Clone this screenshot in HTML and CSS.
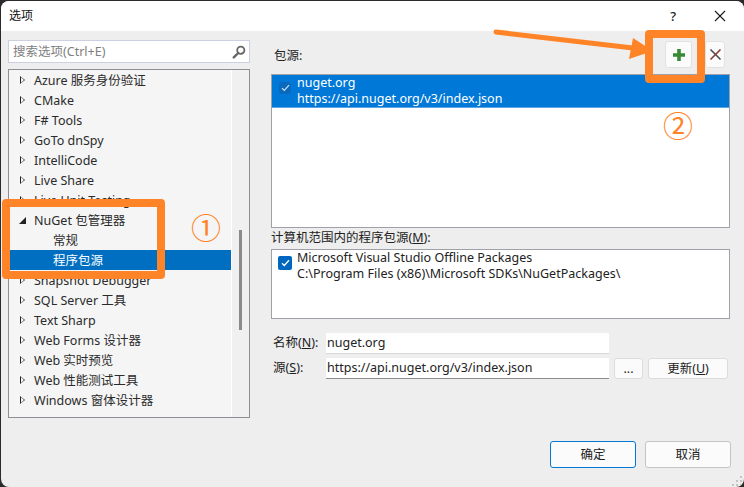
FILE: index.html
```html
<!DOCTYPE html>
<html lang="zh">
<head>
<meta charset="utf-8">
<title>选项</title>
<link rel="stylesheet" href="styles.css">
</head>
<body>
<div class="window">
  <header class="titlebar">
    <span class="title">选项</span>
    <span class="help">?</span>
    <svg class="close" width="12" height="12" viewBox="0 0 12 12"><path d="M1 1l10 10M11 1L1 11" stroke="#1a1a1a" stroke-width="1.1" fill="none"/></svg>
  </header>
  <main class="content">
    <section class="left">
      <div class="search">
        <span class="placeholder">搜索选项(Ctrl+E)</span>
        <svg class="search-icon" width="14" height="14" viewBox="0 0 14 14"><circle cx="8.8" cy="5.2" r="3.6" fill="none" stroke="#666" stroke-width="1.8"/><path d="M6.2 8L1.8 12.4" stroke="#666" stroke-width="2.4" stroke-linecap="round"/></svg>
      </div>
      <div class="tree">
        <div class="tree-list">
          <div class="row"><i class="tri"></i>Azure 服务身份验证</div>
          <div class="row"><i class="tri"></i>CMake</div>
          <div class="row"><i class="tri"></i>F# Tools</div>
          <div class="row"><i class="tri"></i>GoTo dnSpy</div>
          <div class="row"><i class="tri"></i>IntelliCode</div>
          <div class="row"><i class="tri"></i>Live Share</div>
          <div class="row"><i class="tri"></i>Live Unit Testing</div>
          <div class="row"><i class="tri open"></i>NuGet 包管理器</div>
          <div class="row child">常规</div>
          <div class="row child selected">程序包源</div>
          <div class="row"><i class="tri"></i>Snapshot Debugger</div>
          <div class="row"><i class="tri"></i>SQL Server 工具</div>
          <div class="row"><i class="tri"></i>Text Sharp</div>
          <div class="row"><i class="tri"></i>Web Forms 设计器</div>
          <div class="row"><i class="tri"></i>Web 实时预览</div>
          <div class="row"><i class="tri"></i>Web 性能测试工具</div>
          <div class="row"><i class="tri"></i>Windows 窗体设计器</div>
        </div>
        <div class="scrollbar"><div class="thumb"></div></div>
      </div>
    </section>
    <section class="right">
      <div class="toolbar">
        <span class="label">包源:</span>
        <button class="icon-btn"><svg width="14" height="14" viewBox="0 0 14 14"><path d="M7 1v12M1 7h12" stroke="#388a34" stroke-width="3.6" fill="none"/></svg></button>
        <button class="icon-btn narrow"><svg width="13" height="13" viewBox="0 0 13 13"><path d="M1.5 1.5l10 10" stroke="#4a4a4a" stroke-width="1.6" fill="none"/><path d="M11.5 1.5l-10 10" stroke="#8c3a30" stroke-width="1.6" fill="none"/></svg></button>
      </div>
      <div class="listbox top-list">
        <div class="source active">
          <span class="check dim"><svg width="9" height="8" viewBox="0 0 9 8"><path d="M1 4.2l2.3 2.3L8 1.2" stroke="#cfe3f7" stroke-width="1.2" fill="none"/></svg></span>
          <div class="source-text"><div>nuget.org</div><div>https://api.nuget.org/v3/index.json</div></div>
        </div>
      </div>
      <div class="label machine-label">计算机范围内的程序包源(<u>M</u>):</div>
      <div class="listbox machine-list">
        <div class="source">
          <span class="check"><svg width="9" height="8" viewBox="0 0 9 8"><path d="M1 4.2l2.3 2.3L8 1.2" stroke="#fff" stroke-width="1.3" fill="none"/></svg></span>
          <div class="source-text"><div>Microsoft Visual Studio Offline Packages</div><div>C:\Program Files (x86)\Microsoft SDKs\NuGetPackages\</div></div>
        </div>
      </div>
      <div class="form">
        <label class="label field-label">名称(<u>N</u>):</label>
        <div class="input">nuget.org</div>
        <span></span><span></span>
        <label class="label field-label">源(<u>S</u>):</label>
        <div class="input">https://api.nuget.org/v3/index.json</div>
        <button class="btn dots">...</button>
        <button class="btn update">更新(<u>U</u>)</button>
      </div>
    </section>
  </main>
  <footer class="footer">
    <button class="btn action primary">确定</button>
    <button class="btn action">取消</button>
    <svg class="grip" width="11" height="11" viewBox="0 0 11 11"><path d="M8 0h2v2H8zM4 4h2v2H4zM8 4h2v2H8zM0 8h2v2H0zM4 8h2v2H4zM8 8h2v2H8z" fill="#c4c4c4"/></svg>
  </footer>

  <div class="mark mark-one"></div>
  <div class="mark mark-two"></div>
  <svg class="arrow" width="170" height="50" viewBox="0 0 170 50"><path d="M3 4L140 20" stroke="#ff8427" stroke-width="5" stroke-linecap="round" fill="none"/><path d="M140 10L136 31L160 23Z" fill="#ff8427"/></svg>
  <span class="num num-one">①</span>
  <span class="num num-two">②</span>
</div>
</body>
</html>
```
FILE: styles.css
```css
* { box-sizing: border-box; }
html, body { margin: 0; padding: 0; }
body { width: 744px; height: 487px; background: #2b2b2b; overflow: hidden; }
.window {
  position: relative;
  width: 743px;
  height: 486px;
  margin: 1px 0 0 1px;
  background: #eeeeee;
  border-radius: 8px;
  overflow: hidden;
  display: flex;
  flex-direction: column;
  font-family: "Noto Sans", "Noto Sans CJK SC", sans-serif;
  font-size: 12.5px;
  line-height: 16px;
  color: #222;
}
.titlebar {
  flex: none;
  height: 30px;
  background: #fff;
  display: flex;
  align-items: center;
  padding: 0 18px 0 8px;
}
.title { font-size: 12px; color: #111; flex: 1; }
.help { font-size: 13px; font-weight: 500; line-height: 14px; color: #222; margin: -1px 38px 0 0; }
.close { display: block; }
.content { flex: 1; display: flex; padding: 9px 14px 0 7px; gap: 21px; min-height: 0; }
.left { width: 242px; flex: none; display: flex; flex-direction: column; gap: 6px; height: 378px; }
.search {
  height: 23px;
  flex: none;
  background: #fff;
  border: 1px solid #cdd0e0;
  display: flex;
  align-items: center;
  justify-content: space-between;
  padding: 0 3px 0 4px;
}
.placeholder { color: #808080; }
.search-icon { display: block; }
.tree {
  flex: 1;
  min-height: 0;
  display: flex;
  border: 1px solid #8e8e94;
  background: #f5f5f5;
  padding: 0 0 0 1px;
  overflow: hidden;
}
.tree-list { flex: 1; min-width: 0; height: 100%; overflow: hidden; }
.row {
  height: 20px;
  display: flex;
  align-items: center;
  padding: 2px 0 0 24px;
  position: relative;
  color: #2b2b2b;
  white-space: nowrap;
}
.row.child { padding-left: 43px; }
.row.selected { background: #006fc2; color: #fff; }
.tri {
  position: absolute;
  left: 10px;
  top: 6px;
  width: 0;
  height: 0;
  border-style: solid;
  border-width: 4.5px 0 4.5px 5px;
  border-color: transparent transparent transparent #222;
}
.tri::after {
  content: "";
  position: absolute;
  left: -4.2px;
  top: -3px;
  width: 0;
  height: 0;
  border-style: solid;
  border-width: 3px 0 3px 3.2px;
  border-color: transparent transparent transparent #f5f5f5;
}
.tri.open {
  top: 7px;
  left: 9px;
  border-width: 0 0 7px 7px;
  border-color: transparent transparent #222 transparent;
}
.tri.open::after { display: none; }
.scrollbar {
  width: 18px;
  flex: none;
  background: #f0f0f0;
  border-left: 1px solid #fff;
  position: relative;
}
.thumb { position: absolute; left: 7px; top: 160px; width: 3px; height: 100px; background: #8a8a8a; }
.right { flex: 1; min-width: 0; display: flex; flex-direction: column; }
.toolbar { height: 34px; flex: none; display: flex; align-items: flex-start; gap: 13px; padding: 1px 5px 0 3px; }
.toolbar .label { flex: 1; padding-top: 7px; }
.icon-btn {
  width: 27px;
  height: 27px;
  padding: 0;
  background: #fbfbfb;
  border: 1px solid #e2e2e2;
  border-radius: 3px;
  display: flex;
  align-items: center;
  justify-content: center;
}
.icon-btn.narrow { width: 20px; }
.listbox { background: #fff; border: 1px solid #a0a0a8; flex: none; }
.top-list { height: 154px; }
.machine-list { height: 70px; }
.machine-label { margin-top: 1px; height: 20px; line-height: 18px; }
.source { display: flex; align-items: flex-start; height: 33px; padding: 0 0 0 6px; gap: 5px; }
.source.active { background: #0078d7; color: #fff; border-bottom: 1px solid #5aa5e3; }
.source-text { line-height: 16px; }
.check {
  margin-top: 6px;
  width: 14px;
  height: 14px;
  flex: none;
  border-radius: 2px;
  background: #0067c0;
  display: flex;
  align-items: center;
  justify-content: center;
}
.check.dim { background: #0a68bd; width: 12px; height: 12px; margin: 7px 1px 0 1px; }
.form {
  margin-top: 14px;
  display: grid;
  grid-template-columns: 55px 283px 29px 80px;
  grid-auto-rows: 21px;
  column-gap: 0;
  row-gap: 4px;
  align-items: center;
}
.field-label { padding-left: 2px; height: 21px; line-height: 19px; }
.input {
  height: 21px;
  background: #fff;
  border-bottom: 1px solid #8c8c8c;
  line-height: 20px;
  padding-left: 1px;
}
.form > .input:nth-child(2) { border-bottom-color: #d8d8d8; }
.btn {
  height: 21px;
  padding: 0;
  background: #fbfbfb;
  border: 1px solid #dcdcdc;
  border-radius: 3px;
  font: inherit;
  color: #222;
}
.dots { margin-left: 5px; width: 29px; }
.update { margin-left: 10px; width: 80px; }
.footer { height: 46px; flex: none; display: flex; justify-content: flex-end; gap: 9px; padding: 0 13px 0 0; position: relative; }
.action { width: 86px; height: 27px; border-color: #c4c4c4; }
.primary { border-color: #0078d4; }
.grip { position: absolute; right: 1px; bottom: 0; }

.mark { position: absolute; border: 8px solid #ff8427; border-radius: 4px; pointer-events: none; }
.mark-one { left: 1px; top: 198px; width: 163px; height: 80px; }
.mark-two { left: 644px; top: 29px; width: 60px; height: 53px; }
.arrow { position: absolute; left: 492px; top: 27px; }
.num { position: absolute; color: #ff8427; font-size: 30px; line-height: 30px; font-family: "Noto Sans CJK SC", sans-serif; }
.num-one { left: 190px; top: 210px; }
.num-two { left: 662px; top: 108px; }
```
